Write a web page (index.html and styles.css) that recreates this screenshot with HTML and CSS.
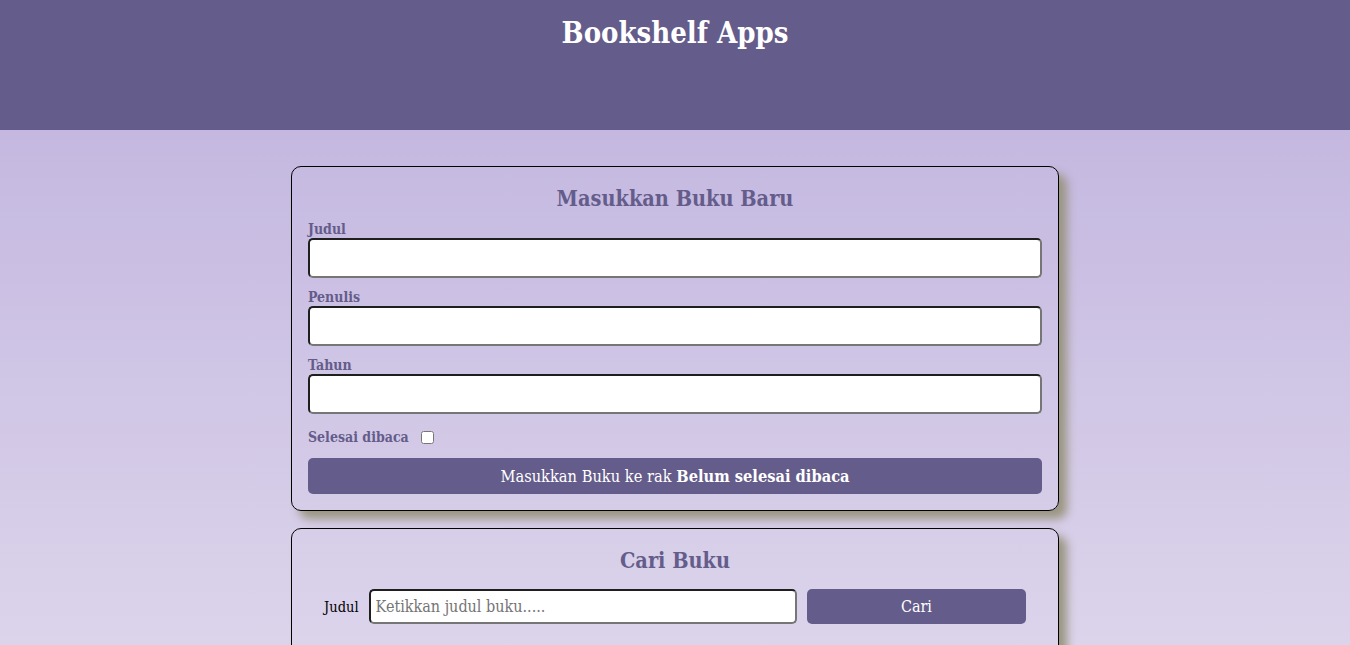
FILE: index.html
```html
<!DOCTYPE html>
<html lang="id">
<head>
<meta charset="utf-8">
<title>Bookshelf Apps</title>
<link rel="stylesheet" href="styles.css">
</head>
<body>
<header class="head-bar">
  <h1 class="head-title">Bookshelf Apps</h1>
</header>
<main class="main">
  <section class="card">
    <h2 class="card-title">Masukkan Buku Baru</h2>
    <form class="book-form">
      <div class="field">
        <label class="field-label" for="judul">Judul</label>
        <input class="field-input" id="judul" type="text">
      </div>
      <div class="field">
        <label class="field-label" for="penulis">Penulis</label>
        <input class="field-input" id="penulis" type="text">
      </div>
      <div class="field">
        <label class="field-label" for="tahun">Tahun</label>
        <input class="field-input" id="tahun" type="number">
      </div>
      <div class="check-row">
        <label class="field-label" for="selesai">Selesai dibaca</label>
        <input class="check" id="selesai" type="checkbox">
      </div>
      <button class="submit-btn" type="button">Masukkan Buku ke rak <strong>Belum selesai dibaca</strong></button>
    </form>
  </section>
  <section class="card">
    <h2 class="card-title">Cari Buku</h2>
    <form class="search-form">
      <label class="search-label" for="cari">Judul</label>
      <input class="search-input" id="cari" type="text" placeholder="Ketikkan judul buku.....">
      <button class="search-btn" type="button">Cari</button>
    </form>
  </section>
</main>
</body>
</html>
```
FILE: styles.css
```css
* { box-sizing: border-box; }
body {
  margin: 0;
  font-family: "DejaVu Serif", "Liberation Serif", serif;
  font-stretch: condensed;
  background: linear-gradient(to bottom, #645c8a 0, #645c8a 130px, #c4b8e0 130px, #dcd4eb 645px);
  min-height: 645px;
}
.head-bar {
  height: 130px;
  background: #645c8a;
  color: #fff;
  text-align: center;
  padding-top: 14px;
}
.head-title {
  margin: 0;
  font-size: 29px;
  line-height: 38px;
  font-weight: 700;
}
.main {
  width: 768px;
  margin: 36px auto 0;
  display: flex;
  flex-direction: column;
  gap: 17px;
}
.card {
  border: 1px solid #000;
  border-radius: 10px;
  padding: 17px 16px 16px;
  box-shadow: 8px 8px 10px #9a9582;
}
.card-title {
  margin: 0 0 7px;
  text-align: center;
  color: #645c8a;
  font-size: 21.5px;
  line-height: 29px;
  font-weight: 700;
}
.book-form { display: flex; flex-direction: column; }
.field { display: flex; flex-direction: column; margin-bottom: 10px; }
.field-label {
  color: #645c8a;
  font-weight: 700;
  font-size: 14px;
  line-height: 18px;
}
.field-input {
  height: 40px;
  border: 2px solid;
  border-color: #1f1f1f #767676 #767676 #1f1f1f;
  border-radius: 5px;
  background: #fff;
  font: inherit;
  font-size: 16px;
}
.check-row { display: flex; align-items: center; gap: 12px; margin: 4px 0 12px; }
.check { margin: 0; width: 13px; height: 13px; }
.submit-btn {
  height: 36px;
  border: 0;
  border-radius: 5px;
  background: #645c8a;
  color: #fff;
  font: inherit;
  font-size: 16.3px;
}
.search-form {
  display: flex;
  align-items: center;
  gap: 10px;
  padding: 7px 16px 20px;
}
.search-label { font-size: 14.5px; color: #000; }
.search-input {
  flex: 2 1 0;
  min-width: 0;
  height: 35px;
  border: 2px solid;
  border-color: #1f1f1f #767676 #767676 #1f1f1f;
  border-radius: 5px;
  background: #fff;
  font: inherit;
  font-size: 16px;
  padding: 0 5px;
}
.search-input::placeholder { color: #757575; }
.search-btn {
  flex: 1 1 0;
  height: 35px;
  border: 0;
  border-radius: 5px;
  background: #645c8a;
  color: #fff;
  font: inherit;
  font-size: 16px;
}
```
